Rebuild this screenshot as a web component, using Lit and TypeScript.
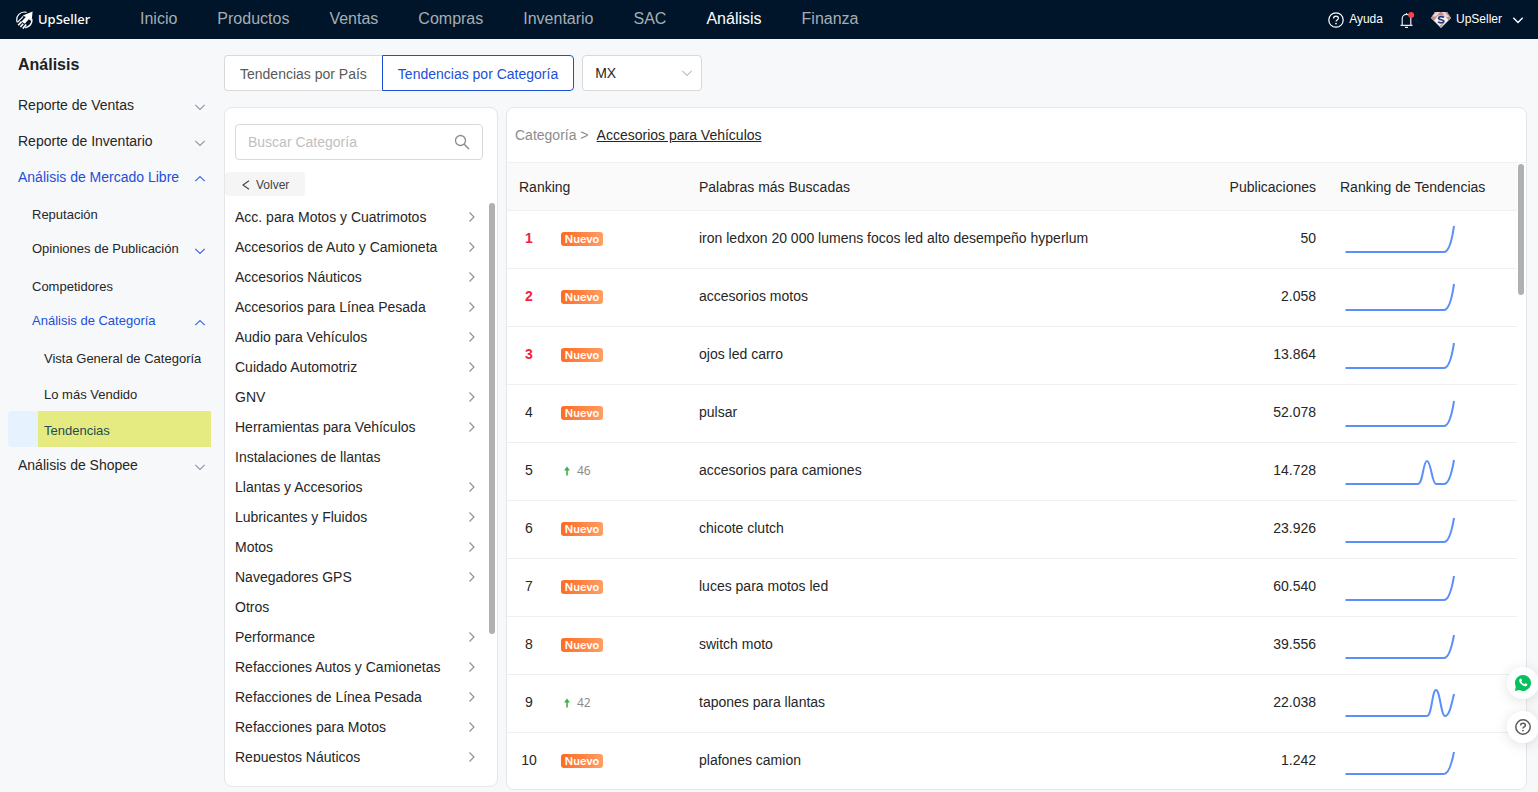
import { LitElement, html, css, svg, nothing } from "lit";
import { customElement, property } from "lit/decorators.js";
import { classMap } from "lit/directives/class-map.js";

type Dir = "up" | "down" | "left" | "right";

const CHEVRONS: Record<Dir, string> = {
  down: "M1.3 3.8 6 8.500 10.700 3.800",
  up: "M1.3 8.200 6 3.500 10.700 8.200",
  left: "M9 1.800 3 6 9 10.200",
  right: "M3.500 1.500 8 6 3.500 10.500",
};

const chevron = (dir: Dir, width = 1.1) => html`
  <svg class="chev" viewBox="0 0 12 12" width="12" height="12" aria-hidden="true">
    <path d=${CHEVRONS[dir]} fill="none" stroke="currentColor" stroke-width=${width} />
  </svg>
`;

const helpIcon = (stroke: number) => html`
  <svg viewBox="0 0 16 16" width="16" height="16" aria-hidden="true">
    <circle cx="8" cy="8" r="7.2" fill="none" stroke="currentColor" stroke-width=${stroke} />
    <path d="M5.6 6.4C5.6 5 6.700 4.200 8 4.200s2.400.8 2.400 2.100c0 1.600-2.400 1.700-2.400 3.300" fill="none" stroke="currentColor" stroke-width=${stroke} />
    <circle cx="8" cy="11.6" r=".85" fill="currentColor" />
  </svg>
`;

@customElement("app-header")
export class AppHeader extends LitElement {
  static styles = css`
    :host { display: block; }
    .bar { display: flex; align-items: center; height: 39px; padding: 0 14px 0 16px; background: #001529; }
    .logo { display: flex; align-items: center; gap: 4px; width: 124px; box-sizing: border-box; color: #fff; text-decoration: none; font: 500 13px/18px "Noto Sans", sans-serif; }
    .logo span { padding-bottom: 2px; }
    .nav { display: flex; gap: 40px; flex: 1; }
    .nav a { color: #a6adb4; font-size: 16px; line-height: 20px; text-decoration: none; padding-bottom: 2px; }
    .nav a.on { color: #fff; }
    .right { display: flex; align-items: center; gap: 16px; }
    .right button { display: flex; align-items: center; border: 0; padding: 0; background: none; color: #fff; font: 12px/16px "Liberation Sans", Arial, sans-serif; gap: 5px; }
    .right svg { display: block; }
    .right span { padding-bottom: 2px; }
    .user .chev { margin-left: 5px; }
  `;

  render() {
    const items = ["Inicio", "Productos", "Ventas", "Compras", "Inventario", "SAC", "Análisis", "Finanza"];
    return html`
      <header class="bar">
        <a class="logo" href="#inicio">
          <svg viewBox="0 0 18 18" width="18" height="18" aria-hidden="true">
            <g fill="none" stroke="#fff">
              <path d="M10.5 1.300A7.700 7.700 0 0 0 1.200 11.200" stroke-width="1.200" />
              <path d="M15.800 8A7.400 7.400 0 0 1 9.200 16.700" stroke-width="1.500" />
              <path d="M2.200 14.200 5.600 10.600M4.400 16 7.200 12.800M6.800 17.600 10.200 13.400" stroke-width="1.600" />
              <path d="M1.400 11.400 7.200 5.400" stroke-width="1.100" />
            </g>
            <path d="M16.600.4 15.600 10.200 12.800 8.200 8.800 12.800 5.600 10.400 9.800 6 6.800 4.600Z" fill="#fff" />
          </svg>
          <span>UpSeller</span>
        </a>
        <nav class="nav" aria-label="Principal">
          ${items.map((t) => html`<a href="#${t.toLowerCase()}" class=${classMap({ on: t === "Análisis" })}>${t}</a>`)}
        </nav>
        <div class="right">
          <button type="button">${helpIcon(1.2)}<span>Ayuda</span></button>
          <button type="button" aria-label="Notificaciones">
            <svg viewBox="0 0 16 18" width="16" height="18">
              <path d="M1.500 14.300h12M3.200 14V7.600a4.300 4.300 0 0 1 8.600 0V14M7.500 3.400V2M6 16.400h3" fill="none" stroke="#e8ebee" stroke-width="1.200" />
              <circle cx="12.200" cy="4" r="3" fill="#ff4040" />
            </svg>
          </button>
          <button type="button" class="user">
            <svg viewBox="0 0 20 18" width="20" height="18">
              <path d="M4 1h12l4 6-10 10L0 7Z" fill="#f6efee" />
              <path d="M4 1h12l4 6-2.500 2.500L14 4.500H7L3 9.800 0 7Z" fill="#c08e8c" />
              <path d="M5 1h4L5 5.500H1.500ZM11 1h3l4 5h-4Z" fill="#ead6d4" />
              <path d="M13.600 11 10 17 8 15Z" fill="#c9a09c" />
              <path d="M13 6.500C12 5.200 7.600 5.100 7.600 7.200c0 2 5.200 1.100 5.200 3.100 0 2-4.500 1.800-5.700.4" fill="none" stroke="#26397a" stroke-width="1.700" />
            </svg>
            <span>UpSeller</span>
            ${chevron("down", 1.4)}
          </button>
        </div>
      </header>
    `;
  }
}

interface MenuItem {
  label: string;
  level: 1 | 2 | 3;
  arrow?: Dir;
  open?: boolean;
  current?: boolean;
}

const MENU: MenuItem[] = [
  { label: "Reporte de Ventas", level: 1, arrow: "down" },
  { label: "Reporte de Inventario", level: 1, arrow: "down" },
  { label: "Análisis de Mercado Libre", level: 1, arrow: "up", open: true },
  { label: "Reputación", level: 2 },
  { label: "Opiniones de Publicación", level: 2, arrow: "down" },
  { label: "Competidores", level: 2 },
  { label: "Análisis de Categoría", level: 2, arrow: "up", open: true },
  { label: "Vista General de Categoría", level: 3 },
  { label: "Lo más Vendido", level: 3 },
  { label: "Tendencias", level: 3, current: true },
  { label: "Análisis de Shopee", level: 1, arrow: "down" },
];

@customElement("app-sidebar")
export class AppSidebar extends LitElement {
  static styles = css`
    :host { display: block; padding: 16px 13px 0 8px; }
    .title { margin: 0 0 12px; padding-left: 10px; font-size: 16px; line-height: 20px; font-weight: 700; color: #212121; }
    .menu { list-style: none; margin: 0; padding: 0; }
    .row { display: flex; align-items: center; justify-content: space-between; box-sizing: border-box; height: 36px; padding: 0 5px 0 10px; color: #262626; font-size: 14px; text-decoration: none; white-space: nowrap; border-radius: 4px; }
    .l2, .l3 { padding-top: 4px; font-size: 13px; }
    .l2 { padding-left: 24px; }
    .l3 { padding-left: 36px; }
    .group { height: 32px; margin-bottom: 4px; }
    .open { color: #1d4fd7; }
    .chev { margin-top: 4px; color: #8b98a9; }
    .l2 .chev, .open .chev { color: #3f63dd; }
    .current { padding: 0; background: #e6f2fd; color: #214b58; }
    .mark { flex: 1; box-sizing: border-box; height: 36px; margin-left: 30px; padding: 10px 0 0 6px; line-height: 20px; background: #e5eb80; }
  `;

  render() {
    return html`
      <h2 class="title">Análisis</h2>
      <ul class="menu">
        ${MENU.map((m) => html`
          <li>
            <a href="#" class=${classMap({
              row: true,
              [`l${m.level}`]: true,
              group: m.level === 2 && !!m.arrow,
              open: !!m.open,
              current: !!m.current,
            })}>
              ${m.current ? html`<span class="mark">${m.label}</span>` : html`<span>${m.label}</span>`}
              ${m.arrow ? chevron(m.arrow) : nothing}
            </a>
          </li>`)}
      </ul>
    `;
  }
}

const CATEGORIES: [string, boolean][] = [
  ["Acc. para Motos y Cuatrimotos", true],
  ["Accesorios de Auto y Camioneta", true],
  ["Accesorios Náuticos", true],
  ["Accesorios para Línea Pesada", true],
  ["Audio para Vehículos", true],
  ["Cuidado Automotriz", true],
  ["GNV", true],
  ["Herramientas para Vehículos", true],
  ["Instalaciones de llantas", false],
  ["Llantas y Accesorios", true],
  ["Lubricantes y Fluidos", true],
  ["Motos", true],
  ["Navegadores GPS", true],
  ["Otros", false],
  ["Performance", true],
  ["Refacciones Autos y Camionetas", true],
  ["Refacciones de Línea Pesada", true],
  ["Refacciones para Motos", true],
  ["Repuestos Náuticos", true],
];

@customElement("category-panel")
export class CategoryPanel extends LitElement {
  static styles = css`
    :host { display: flex; flex-direction: column; min-height: 0; box-sizing: border-box; padding: 16px 0 24px; background: #fff; border: 1px solid #e4e6e9; border-radius: 8px; }
    .search { display: flex; align-items: center; height: 36px; box-sizing: border-box; margin: 0 14px 12px 10px; padding: 0 12px; border: 1px solid #d9d9d9; border-radius: 4px; color: #8c8c8c; }
    .search input { flex: 1; min-width: 0; border: 0; padding: 0; outline: 0; background: none; color: #262626; font: 14px/20px "Liberation Sans", Arial, sans-serif; }
    .search input::placeholder { color: #bfbfbf; }
    .back { align-self: flex-start; display: flex; align-items: center; gap: 4px; height: 24px; width: 80px; padding: 1px 0 0 15px; border: 0; border-radius: 4px; background: #f5f5f5; color: #434343; font: 12px/16px "Liberation Sans", Arial, sans-serif; }
    .scroll { flex: 1; display: flex; min-height: 0; margin-top: 6px; overflow: hidden; }
    .list { flex: 1; list-style: none; margin: 0; padding: 0 0 0 10px; }
    .list a { display: flex; align-items: center; justify-content: space-between; height: 30px; color: #262626; font-size: 14px; text-decoration: none; white-space: nowrap; }
    .list .chev { color: #8c8c8c; margin-right: 11px; }
    .thumb { width: 6px; height: 77%; margin: 1px 2px 0 0; border-radius: 3px; background: #b0b0b0; }
  `;

  render() {
    return html`
      <label class="search">
        <input type="search" placeholder="Buscar Categoría" aria-label="Buscar Categoría" />
        <svg viewBox="0 0 16 16" width="16" height="16" aria-hidden="true">
          <circle cx="6.500" cy="6.500" r="5" fill="none" stroke="currentColor" stroke-width="1.300" />
          <path d="M10.200 10.200 15 15" stroke="currentColor" stroke-width="1.500" />
        </svg>
      </label>
      <button class="back" type="button">${chevron("left")} Volver</button>
      <div class="scroll">
        <ul class="list">
          ${CATEGORIES.map(([t, more]) => html`<li><a href="#"><span>${t}</span>${more ? chevron("right") : nothing}</a></li>`)}
        </ul>
        <div class="thumb"></div>
      </div>
    `;
  }
}

@customElement("trend-line")
export class TrendLine extends LitElement {
  @property({ type: Number }) end = 3;
  @property({ type: Number }) peakX = 0;
  @property({ type: Number }) peakY = 0;

  static styles = css`
    :host { display: block; }
    svg { display: block; }
  `;

  render() {
    const { end, peakX: p, peakY: y } = this;
    const base = 28;
    let d = `M.5 ${base}`;
    if (p) {
      d += `H${p - 9}C${p - 4} ${base} ${p - 4} ${y} ${p} ${y}S${p + 5} ${base} ${p + 9} ${base}`;
    }
    d += p > 85
      ? `C${p + 13} ${base} ${p + 15} 19 109 ${end}`
      : `H99C104 ${base} 107 16 109 ${end}`;
    return html`
      <svg viewBox="0 0 110 30" width="110" height="30" role="img" aria-label="Tendencia">
        ${svg`<path d=${d} fill="none" stroke="#5b8ff9" stroke-width="2" />`}
      </svg>
    `;
  }
}

interface Row {
  words: string;
  count: string;
  rise?: number;
  end: number;
  peak?: [number, number];
}

const ROWS: Row[] = [
  { words: "iron ledxon 20 000 lumens focos led alto desempeño hyperlum", count: "50", end: 2 },
  { words: "accesorios motos", count: "2.058", end: 2 },
  { words: "ojos led carro", count: "13.864", end: 3 },
  { words: "pulsar", count: "52.078", end: 3 },
  { words: "accesorios para camiones", count: "14.728", rise: 46, end: 4, peak: [82, 5] },
  { words: "chicote clutch", count: "23.926", end: 4 },
  { words: "luces para motos led", count: "60.540", end: 4 },
  { words: "switch moto", count: "39.556", end: 5 },
  { words: "tapones para llantas", count: "22.038", rise: 42, end: 6, peak: [91, 2] },
  { words: "plafones camion", count: "1.242", end: 6 },
];

@customElement("trend-table")
export class TrendTable extends LitElement {
  static styles = css`
    :host { display: flex; flex-direction: column; min-width: 0; min-height: 0; box-sizing: border-box; overflow: hidden; background: #fff; border: 1px solid #e4e6e9; border-radius: 8px; color: #262626; font-size: 14px; }
    .crumb { display: flex; gap: 8px; padding: 17px 8px; line-height: 20px; color: #8c8c8c; }
    .crumb a { color: #262626; }
    .scroll { display: flex; flex: 1; min-height: 0; overflow: hidden; border-top: 1px solid #f0f0f0; }
    .wrap { flex: 1; min-width: 0; }
    .thumb { width: 6px; height: 131px; margin: 1px 2px 0 1px; border-radius: 3px; background: #b0b0b0; }
    table { width: 100%; table-layout: fixed; border-collapse: separate; border-spacing: 0; }
    th, td { box-sizing: border-box; text-align: left; font-weight: 400; padding: 0 12px; border-bottom: 1px solid #f0f0f0; }
    th { height: 48px; background: #fafafa; }
    td { height: 58px; padding-bottom: 4px; }
    tr:last-child td { border-bottom-color: transparent; }
    .c-rank { width: 180px; }
    .c-count { width: 180px; }
    .c-trend { width: 189px; }
    .num { text-align: right; }
    .trend { padding: 0 0 2px 17px; }
    .rank { display: flex; align-items: center; gap: 22px; }
    .pos { width: 20px; text-align: center; }
    .top { color: #f5223c; font-weight: 700; }
    .tag { box-sizing: border-box; width: 42px; height: 14px; margin-top: 2px; border-radius: 3px; background: linear-gradient(100deg, #ff6a21, #ff9f66); color: #fff; font: 600 11px/14px Inter, sans-serif; text-align: center; }
    .rise { display: flex; align-items: center; gap: 6px; padding: 2px 0 0 2px; color: #8c8c8c; font: 12px/16px "Noto Sans", sans-serif; }
  `;

  render() {
    return html`
      <div class="crumb"><span>Categoría &gt;</span><a href="#">Accesorios para Vehículos</a></div>
      <div class="scroll">
        <div class="wrap">
          <table>
            <thead>
              <tr>
                <th class="c-rank" scope="col">Ranking</th>
                <th scope="col">Palabras más Buscadas</th>
                <th class="c-count num" scope="col">Publicaciones</th>
                <th class="c-trend" scope="col">Ranking de Tendencias</th>
              </tr>
            </thead>
            <tbody>
              ${ROWS.map((r, i) => html`
                <tr>
                  <td>
                    <div class="rank">
                      <span class=${classMap({ pos: true, top: i < 3 })}>${i + 1}</span>
                      ${r.rise
                        ? html`<span class="rise">
                            <svg viewBox="0 0 8 10" width="8" height="10" aria-hidden="true">
                              <path d="M4 9.500V2" fill="none" stroke="#3fae4a" stroke-width="1.600" />
                              <path d="M4 .6 7 4.600H1Z" fill="#3fae4a" />
                            </svg>${r.rise}</span>`
                        : html`<span class="tag">Nuevo</span>`}
                    </div>
                  </td>
                  <td>${r.words}</td>
                  <td class="num">${r.count}</td>
                  <td class="trend">
                    <trend-line .end=${r.end} .peakX=${r.peak?.[0] ?? 0} .peakY=${r.peak?.[1] ?? 0}></trend-line>
                  </td>
                </tr>`)}
            </tbody>
          </table>
        </div>
        <div class="thumb"></div>
      </div>
    `;
  }
}

@customElement("app-root")
export class AppRoot extends LitElement {
  static styles = css`
    :host { display: flex; flex-direction: column; height: 100vh; overflow: hidden; background: #f7f8fa; color: #262626; font: 14px/20px "Liberation Sans", Arial, sans-serif; }
    .body { flex: 1; min-height: 0; display: grid; grid-template-columns: 224px 1fr; }
    .main { display: flex; flex-direction: column; min-width: 0; min-height: 0; padding: 16px 11px 2px 0; }
    .tools { display: flex; gap: 8px; margin-bottom: 16px; }
    .tabs { display: flex; }
    .tab { height: 36px; box-sizing: border-box; padding: 2px 15px 0; border: 1px solid #d9d9d9; border-right: 0; border-radius: 4px 0 0 4px; background: #fff; color: #595959; font: 14px/20px "Liberation Sans", Arial, sans-serif; }
    .tab.on { border: 1px solid #1d4fd7; border-radius: 0 4px 4px 0; color: #1d4fd7; }
    .select { display: grid; align-items: center; width: 120px; height: 36px; }
    .select > * { grid-area: 1 / 1; }
    .select select { appearance: none; height: 36px; border: 1px solid #d9d9d9; border-radius: 4px; padding: 0 12px; background: #fff; color: #262626; font: 14px/20px "Liberation Sans", Arial, sans-serif; }
    .select .chev { justify-self: end; margin-right: 9px; color: #bfbfbf; pointer-events: none; }
    .panels { flex: 1; min-height: 0; display: grid; grid-template-columns: 274px 1fr; grid-template-rows: minmax(0, 1fr); gap: 8px; }
    .panels category-panel { margin-bottom: 3px; }
    .float { position: fixed; right: -1px; bottom: 49px; display: flex; flex-direction: column; gap: 12px; }
    .float button { display: flex; align-items: center; justify-content: center; width: 32px; height: 32px; padding: 0; border: 0; border-radius: 50%; background: #fff; color: #595959; box-shadow: 0 2px 14px rgba(0, 0, 0, 0.12); }
  `;

  render() {
    return html`
      <app-header></app-header>
      <div class="body">
        <app-sidebar></app-sidebar>
        <main class="main">
          <div class="tools">
            <div class="tabs">
              <button class="tab" type="button">Tendencias por País</button>
              <button class="tab on" type="button">Tendencias por Categoría</button>
            </div>
            <label class="select">
              <select aria-label="País"><option>MX</option></select>
              ${chevron("down")}
            </label>
          </div>
          <div class="panels">
            <category-panel></category-panel>
            <trend-table></trend-table>
          </div>
        </main>
      </div>
      <div class="float">
        <button type="button" aria-label="WhatsApp">
          <svg viewBox="0 0 16 16" width="16" height="16">
            <path d="M8 0a8 8 0 1 1-3.700 15.100L0 16l.800-4.400A8 8 0 0 1 8 0Z" fill="#07c160" />
            <path d="M5.300 3.800c.6-.5 1-.3 1.200.2l.5 1.200c.2.600-.8 1-.5 1.500.6 1.100 1.500 1.900 2.600 2.400.5.200.9-1 1.500-.8l1.400.7c.6.300.3 1.300-.2 1.700-1.100.9-2.700.6-4.600-.7C5.200 8.600 4.100 7.100 4.200 5.600c0-.7.500-1.400 1.100-1.800Z" fill="#fff" />
          </svg>
        </button>
        <button type="button" aria-label="Ayuda">${helpIcon(1.5)}</button>
      </div>
    `;
  }
}
